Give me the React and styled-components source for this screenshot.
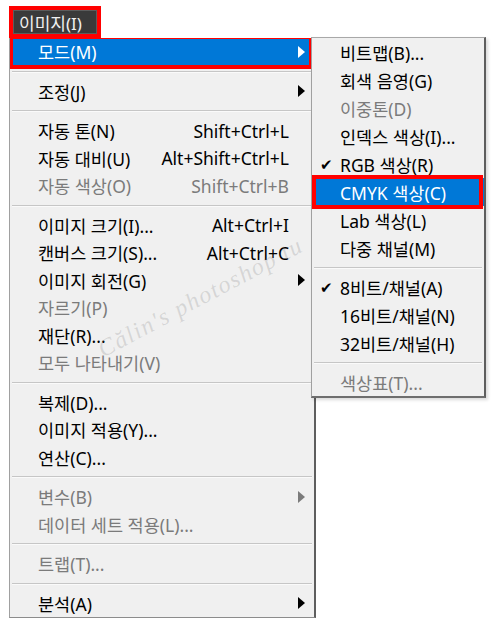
import React from "react";
import styled, { createGlobalStyle, css } from "styled-components";

const GlobalStyle = createGlobalStyle`
  body {
    margin: 0;
    background: #ffffff;
    font-family: "Noto Sans", "Noto Sans CJK KR", sans-serif;
  }
`;

const Page = styled.div`
  width: 500px;
  height: 620px;
  box-sizing: border-box;
  padding: 6px 0 0 9px;
  overflow: hidden;
`;

const TabBox = styled.div`
  display: flex;
  width: 92px;
  height: 32px;
  box-sizing: border-box;
  border: 4px solid #ff0000;
`;

const Tab = styled.div`
  flex: 1;
  display: flex;
  align-items: center;
  padding-left: 5px;
  background: #3a3a3a;
  border: 1px solid #5c5c5c;
  color: #f0f0f0;
  font-size: 17px;
  white-space: nowrap;
`;

const MenuWrap = styled.div`
  position: relative;
  width: 307px;
`;

const Menu = styled.div`
  position: relative;
  background: #f0f0f0;
  border-left: 1px solid #a0a0a0;
  border-right: 2px solid #5e5e5e;
  border-bottom: 1px solid #8c8c8c;
  overflow: hidden;
`;

const Item = styled.div`
  position: relative;
  display: flex;
  align-items: center;
  height: ${(props) => props.$h}px;
  padding-left: 28px;
  font-size: 17.5px;
  color: ${(props) => (props.$disabled ? "#7b7b7b" : "#000000")};
  white-space: nowrap;
  ${(props) =>
    props.$active &&
    css`
      background: #0078d7;
      color: #ffffff;
      &::after {
        content: "";
        position: absolute;
        top: -3px;
        bottom: -3px;
        left: ${props.$sub ? "0" : "-1px"};
        right: 1px;
        border: 4px solid #ff0000;
        pointer-events: none;
      }
    `}
`;

const Check = styled.span`
  position: absolute;
  left: 8px;
  font-size: 15px;
  color: #000;
`;

const Label = styled.span`
  flex: 1;
`;

const Shortcut = styled.span`
  text-align: right;
`;

const ArrowCell = styled.span`
  width: 25px;
  flex: none;
  display: flex;
  align-items: center;
  padding-left: 9px;
  box-sizing: border-box;
`;

const Arrow = styled.span`
  width: 0;
  height: 0;
  border-top: 6.5px solid transparent;
  border-bottom: 6.5px solid transparent;
  border-left: 7px solid ${(props) => props.$color};
`;

const Separator = styled.div`
  height: ${(props) => props.$h}px;
  display: flex;
  align-items: center;
  padding: 0 2px;
  &::before {
    content: "";
    flex: 1;
    height: 1px;
    background: #c6c6c6;
    border-bottom: 1px solid #fafafa;
  }
`;

const SubMenu = styled.div`
  position: absolute;
  left: 302px;
  top: -1px;
  width: 175px;
  box-sizing: border-box;
  background: #f0f0f0;
  border-top: 1px solid #a8a8a8;
  border-left: 1px solid #a0a0a0;
  border-right: 2px solid #5e5e5e;
  border-bottom: 2px solid #6e6e6e;
  box-shadow: 2px 2px 3px rgba(0, 0, 0, 0.15);
  z-index: 2;
`;

const Watermark = styled.div`
  position: absolute;
  left: 96px;
  top: 298px;
  font-family: "Liberation Serif", serif;
  font-style: italic;
  font-size: 24px;
  color: rgba(120, 120, 120, 0.22);
  transform: rotate(-28deg);
  transform-origin: left bottom;
  white-space: nowrap;
  pointer-events: none;
  letter-spacing: 1.5px;
`;

const mainItems = [
  { label: "모드(M)", arrow: true, active: true },
  "sep",
  { label: "조정(J)", arrow: true },
  "sep",
  { label: "자동 톤(N)", shortcut: "Shift+Ctrl+L" },
  { label: "자동 대비(U)", shortcut: "Alt+Shift+Ctrl+L" },
  { label: "자동 색상(O)", shortcut: "Shift+Ctrl+B", disabled: true },
  "sep",
  { label: "이미지 크기(I)...", shortcut: "Alt+Ctrl+I" },
  { label: "캔버스 크기(S)...", shortcut: "Alt+Ctrl+C" },
  { label: "이미지 회전(G)", arrow: true },
  { label: "자르기(P)", disabled: true },
  { label: "재단(R)..." },
  { label: "모두 나타내기(V)", disabled: true },
  "sep",
  { label: "복제(D)..." },
  { label: "이미지 적용(Y)..." },
  { label: "연산(C)..." },
  "sep",
  { label: "변수(B)", arrow: true, disabled: true },
  { label: "데이터 세트 적용(L)...", disabled: true },
  "sep",
  { label: "트랩(T)...", disabled: true },
  "sep",
  { label: "분석(A)", arrow: true },
];

const subItems = [
  { label: "비트맵(B)..." },
  { label: "회색 음영(G)" },
  { label: "이중톤(D)", disabled: true },
  { label: "인덱스 색상(I)..." },
  { label: "RGB 색상(R)", checked: true },
  { label: "CMYK 색상(C)", active: true },
  { label: "Lab 색상(L)" },
  { label: "다중 채널(M)" },
  "sep",
  { label: "8비트/채널(A)", checked: true },
  { label: "16비트/채널(N)" },
  { label: "32비트/채널(H)" },
  "sep",
  { label: "색상표(T)...", disabled: true },
];

const arrowColor = (item) =>
  item.active ? "#ffffff" : item.disabled ? "#7b7b7b" : "#000000";

const App = () => {
  return (
    <Page>
      <GlobalStyle />
      <TabBox>
        <Tab>이미지(I)</Tab>
      </TabBox>
      <MenuWrap>
        <Menu>
          {mainItems.map((item, i) =>
            item === "sep" ? (
              <Separator key={i} $h={12} />
            ) : (
              <Item
                key={i}
                $h={27.5}
                $active={item.active}
                $disabled={item.disabled}
              >
                <Label>{item.label}</Label>
                {item.shortcut && <Shortcut>{item.shortcut}</Shortcut>}
                <ArrowCell>
                  {item.arrow && <Arrow $color={arrowColor(item)} />}
                </ArrowCell>
              </Item>
            )
          )}
          <Watermark>Călin's photoshop tu</Watermark>
        </Menu>
        <SubMenu>
          {subItems.map((item, i) =>
            item === "sep" ? (
              <Separator key={i} $h={11} />
            ) : (
              <Item
                key={i}
                $h={28}
                $sub
                $active={item.active}
                $disabled={item.disabled}
              >
                {item.checked && <Check>✔</Check>}
                <Label>{item.label}</Label>
              </Item>
            )
          )}
        </SubMenu>
      </MenuWrap>
    </Page>
  );
};

export default App;
